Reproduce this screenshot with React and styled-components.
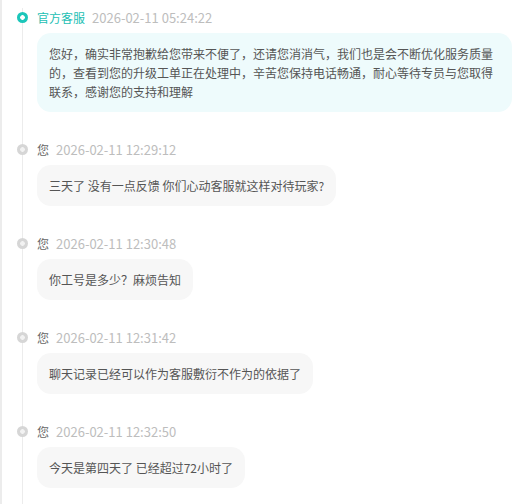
import styled, { createGlobalStyle } from 'styled-components';

const messages = [
  {
    staff: true,
    name: '官方客服',
    time: '2026-02-11 05:24:22',
    text: '您好，确实非常抱歉给您带来不便了，还请您消消气，我们也是会不断优化服务质量的，查看到您的升级工单正在处理中，辛苦您保持电话畅通，耐心等待专员与您取得联系，感谢您的支持和理解',
  },
  { name: '您', time: '2026-02-11 12:29:12', text: '三天了 没有一点反馈 你们心动客服就这样对待玩家?' },
  { name: '您', time: '2026-02-11 12:30:48', text: '你工号是多少？麻烦告知' },
  { name: '您', time: '2026-02-11 12:31:42', text: '聊天记录已经可以作为客服敷衍不作为的依据了' },
  { name: '您', time: '2026-02-11 12:32:50', text: '今天是第四天了 已经超过72小时了' },
];

export default function App() {
  return (
    <>
      <GlobalStyle />
      <Page>
        <Timeline>
          {messages.map((m, i) => (
            <Item key={i}>
              <Dot $staff={m.staff} />
              <Header>
                <Name $staff={m.staff}>{m.name}</Name>
                <Time>{m.time}</Time>
              </Header>
              <Bubble $staff={m.staff}>{m.text}</Bubble>
            </Item>
          ))}
        </Timeline>
      </Page>
    </>
  );
}

const GlobalStyle = createGlobalStyle`
  html, body {
    margin: 0;
    padding: 0;
    background: #fff;
  }
  body {
    font-family: "Noto Sans CJK SC", "Noto Sans", sans-serif;
    font-size: 12px;
  }
`;

const Page = styled.div`
  min-height: 504px;
  box-sizing: border-box;
  border-left: 2px solid #ececec;
  padding: 8px 16px 0 20px;
`;

const Timeline = styled.div`
  display: flex;
  flex-direction: column;
`;

const Item = styled.div`
  position: relative;
  border-left: 1px solid #ececec;
  padding: 0 0 28px 14px;
`;

const Dot = styled.span`
  position: absolute;
  left: -6px;
  top: 4px;
  width: 11px;
  height: 11px;
  border-radius: 50%;
  background: ${(p) =>
    p.$staff
      ? 'radial-gradient(circle, #fff 0 2px, #1cc6ba 2.6px)'
      : 'radial-gradient(circle, #f2f2f2 0 2px, #d6d6d6 2.6px)'};
`;

const Header = styled.div`
  display: flex;
  align-items: center;
  height: 20px;
  line-height: 20px;
  margin-bottom: 5px;
`;

const Name = styled.span`
  color: ${(p) => (p.$staff ? '#1cc0b4' : '#666')};
  font-size: 12px;
`;

const Time = styled.span`
  margin-left: 7px;
  color: #bdbdbd;
  font-size: 13px;
`;

const Bubble = styled.div`
  width: fit-content;
  max-width: 100%;
  box-sizing: border-box;
  padding: 11px 12px;
  border-radius: 14px;
  background: ${(p) => (p.$staff ? '#eefbfc' : '#f7f7f7')};
  color: #555;
  font-size: 12px;
  line-height: 19px;
  word-break: break-all;
`;
